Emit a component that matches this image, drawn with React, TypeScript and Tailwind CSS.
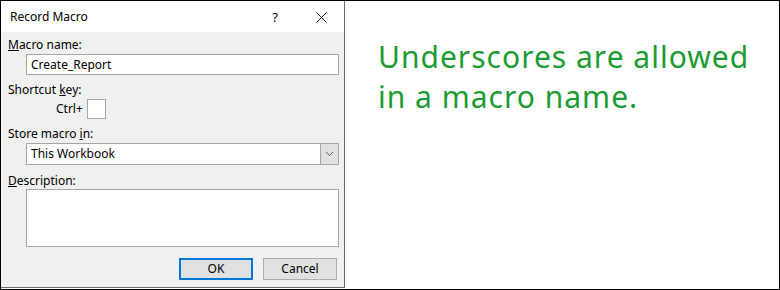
import React from 'react';

const font = { fontFamily: '"Noto Sans", "Open Sans", sans-serif' };

const App: React.FC = () => {
  return (
    <div className="w-[780px] h-[290px] border border-black bg-white flex" style={font}>
      {/* Dialog */}
      <div className="w-[344px] h-[287px] border-r border-b border-[#6b6b6b] flex flex-col bg-[#f0f0f0] text-[12px] leading-[16px] text-black">
        {/* Title bar */}
        <div className="h-[31px] bg-white flex items-center pl-[9px] pr-[17px]">
          <span className="text-[12px]">Record Macro</span>
          <span className="ml-auto mr-[38px] text-[13px]">?</span>
          <svg width="11" height="11" viewBox="0 0 11 11" className="mt-[1px]">
            <path d="M0.5 0.5L10.5 10.5M10.5 0.5L0.5 10.5" stroke="#111" strokeWidth="1" />
          </svg>
        </div>

        {/* Body */}
        <div className="flex flex-col pl-[7px] pt-[5px]">
          <div>
            <span className="underline">M</span>acro name:
          </div>
          <div className="mt-[1px] ml-[18px] w-[313px] h-[21px] bg-white border border-[#a6a6a6] flex items-center pl-[4px]">
            Create_Report
          </div>

          <div className="mt-[7px]">
            Shortcut <span className="underline">k</span>ey:
          </div>
          <div className="mt-[1px] flex items-center">
            <span className="ml-[48px] w-[31px]">Ctrl+</span>
            <div className="w-[19px] h-[20px] bg-white border border-[#a6a6a6]" />
          </div>

          <div className="mt-[7px]">
            Store macro <span className="underline">i</span>n:
          </div>
          <div className="mt-[1px] ml-[18px] w-[313px] h-[22px] bg-white border border-[#a6a6a6] flex items-center">
            <span className="pl-[4px] flex-1">This Workbook</span>
            <div className="w-[18px] h-full bg-[#e1e1e1] border-l border-[#a6a6a6] flex items-center justify-center">
              <svg width="9" height="6" viewBox="0 0 9 6">
                <path d="M1 1L4.5 4.5L8 1" stroke="#606060" strokeWidth="1" fill="none" />
              </svg>
            </div>
          </div>

          <div className="mt-[8px]">
            <span className="underline">D</span>escription:
          </div>
          <div className="ml-[18px] w-[313px] h-[58px] bg-white border border-[#a6a6a6]" />

          <div className="mt-[11px] flex gap-[10px] ml-[171px]">
            <button className="w-[74px] h-[22px] bg-[#e1e1e1] border-2 border-[#0078d7] flex items-center justify-center">
              OK
            </button>
            <button className="w-[74px] h-[22px] bg-[#e1e1e1] border border-[#adadad] flex items-center justify-center">
              Cancel
            </button>
          </div>
        </div>
      </div>

      {/* Note */}
      <div className="flex-1 pl-[33px] pt-[36px] text-[30px] leading-[40px] tracking-[1px] text-[#1c9b32]">
        Underscores are allowed
        <br />
        in a macro name.
      </div>
    </div>
  );
};

export default App;
